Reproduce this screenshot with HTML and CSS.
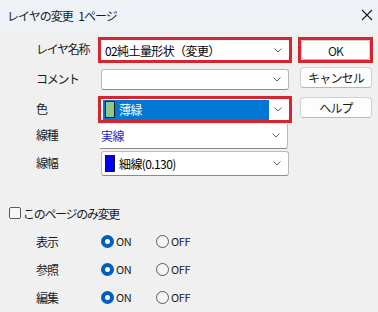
FILE: index.html
```html
<!DOCTYPE html>
<html lang="ja">
<head>
<meta charset="utf-8">
<link rel="stylesheet" href="styles.css">
</head>
<body>
<div class="titlebar">
  <span class="title">レイヤの変更 1ページ</span>
  <svg class="close" width="12" height="12" viewBox="0 0 12 12"><path d="M1 1 L11 11 M11 1 L1 11" stroke="#1b1b1b" stroke-width="1.1" fill="none"/></svg>
</div>
<div class="top">
  <div class="form">
    <div class="lbl">レイヤ名称</div>
    <div class="cell"><div class="mark"><div class="combo plain"><span class="val">02純土量形状（変更）</span><svg class="chev" width="8" height="5" viewBox="0 0 8 5"><path d="M0.5 0.5 L4 4 L7.5 0.5" stroke="#606060" fill="none"/></svg></div></div></div>

    <div class="lbl">コメント</div>
    <div class="cell"><div class="combo boxed"><span class="val"></span><svg class="chev" width="8" height="5" viewBox="0 0 8 5"><path d="M0.5 0.5 L4 4 L7.5 0.5" stroke="#606060" fill="none"/></svg></div></div>

    <div class="lbl">色</div>
    <div class="cell"><div class="mark"><div class="combo plain color"><span class="sel"><span class="swatch green"></span><span class="seltext">薄緑</span></span><svg class="chev" width="8" height="5" viewBox="0 0 8 5"><path d="M0.5 0.5 L4 4 L7.5 0.5" stroke="#606060" fill="none"/></svg></div></div></div>

    <div class="lbl">線種</div>
    <div class="cell"><div class="combo open"><span class="val blue">実線</span><svg class="chev" width="8" height="5" viewBox="0 0 8 5"><path d="M0.5 0.5 L4 4 L7.5 0.5" stroke="#606060" fill="none"/></svg></div></div>

    <div class="lbl">線幅</div>
    <div class="cell"><div class="combo boxed tall"><span class="swatch navy"></span><span class="val">細線(0.130)</span><svg class="chev" width="8" height="5" viewBox="0 0 8 5"><path d="M0.5 0.5 L4 4 L7.5 0.5" stroke="#606060" fill="none"/></svg></div></div>
  </div>
  <div class="buttons">
    <div class="mark btnmark"><button class="btn">OK</button></div>
    <button class="btn cancel">キャンセル</button>
    <button class="btn help">ヘルプ</button>
  </div>
</div>
<div class="bottom">
  <div class="check"><span class="box"></span><span class="ctext">このページのみ変更</span></div>
  <div class="radios">
    <div class="rlbl">表示</div>
    <div class="opt"><span class="radio on"></span><span class="otext">ON</span></div>
    <div class="opt"><span class="radio"></span><span class="otext">OFF</span></div>

    <div class="rlbl">参照</div>
    <div class="opt"><span class="radio on"></span><span class="otext">ON</span></div>
    <div class="opt"><span class="radio"></span><span class="otext">OFF</span></div>

    <div class="rlbl">編集</div>
    <div class="opt"><span class="radio on"></span><span class="otext">ON</span></div>
    <div class="opt"><span class="radio"></span><span class="otext">OFF</span></div>
  </div>
</div>
</body>
</html>
```

FILE: styles.css
```css
* { box-sizing: border-box; margin: 0; padding: 0; }
html, body { width: 378px; height: 312px; overflow: hidden; }
body {
  background: #f0f0f0;
  font-family: "Noto Sans CJK JP", "Noto Sans", sans-serif;
  font-size: 12px;
  color: #1a1a1a;
}
.titlebar {
  height: 30px;
  background: #eef2f7;
  display: flex;
  align-items: center;
  justify-content: space-between;
  padding: 0 5px 0 7px;
}
.title { letter-spacing: -1px; word-spacing: 4px; color: #1b1b1b; }
.close { display: block; }

.top { display: flex; padding-top: 7px; }
.form {
  display: grid;
  grid-template-columns: 98px 194px;
  grid-template-rows: 26px 33px 27px 26px 29px;
}
.lbl {
  padding-left: 36px;
  display: flex;
  align-items: center;
  letter-spacing: -1.3px;
  padding-bottom: 3px;
}
.cell { display: flex; align-items: center; padding-left: 3px; }
.mark { border: 3px solid #d7252f; height: 100%; width: 194px; }
.cell .mark { margin-left: -3px; }
.combo {
  display: flex;
  align-items: center;
  background: #fff;
  width: 188px;
  height: 21px;
}
.combo.plain { height: 100%; width: 100%; }
.combo.boxed { border: 1px solid #b9b9b9; border-bottom-color: #8a8a8a; border-radius: 3px; }
.combo.tall { height: 25px; }
.combo.open {
  height: 25px;
  margin-left: -1px;
  border-right: 1px solid #b9b9b9;
  border-bottom: 1px solid #8a8a8a;
  border-bottom-right-radius: 3px;
}
.val { padding-left: 4px; letter-spacing: -0.6px; white-space: nowrap; color: #000; }
.val.blue { color: #1c1cc8; padding-left: 1px; }
.chev { margin-left: auto; margin-right: 7px; flex: none; }
.combo.color { padding-left: 2px; }
.sel {
  display: flex;
  align-items: center;
  background: #0078d4;
  width: 166px;
  height: 20px;
  padding-left: 2px;
}
.swatch {
  display: block;
  width: 10px;
  height: 17px;
  border: 1px solid #1a1a1a;
  flex: none;
}
.green { background: #8cc98c; }
.navy { background: #0000ff; margin-left: 3px; }
.seltext { color: #fff; padding-left: 4px; letter-spacing: -0.6px; }

.buttons {
  display: flex;
  flex-direction: column;
  margin-left: 6px;
  width: 75px;
}
.btn {
  font-family: inherit;
  font-size: 12px;
  font-weight: normal;
  background: #fdfdfd;
  border: 1px solid #d0d0d0;
  border-bottom-color: #b8b8b8;
  border-radius: 4px;
  color: #1b1b1b;
  height: 21px;
  width: 72px;
  margin-left: 2px;
  letter-spacing: -0.8px;
}
.btnmark { height: 26px; width: 75px; }
.btnmark .btn { width: 100%; height: 100%; margin: 0; border-radius: 3px; }
.cancel { margin-top: 4px; }
.help { margin-top: 9px; }

.bottom { padding-top: 27px; }
.check { display: flex; align-items: center; height: 16px; padding-left: 9px; }
.box {
  width: 12px;
  height: 12px;
  border: 1px solid #5a5a5a;
  border-radius: 2px;
  background: #f7f7f7;
}
.ctext { padding-left: 2px; letter-spacing: -1.3px; }
.radios {
  display: grid;
  grid-template-columns: 65px 55px auto;
  grid-auto-rows: 28px;
  padding-left: 36px;
  margin-top: 6px;
}
.rlbl { display: flex; align-items: center; letter-spacing: -1px; }
.opt { display: flex; align-items: center; }
.radio {
  width: 13px;
  height: 13px;
  border-radius: 50%;
  border: 1px solid #5a5a5a;
  background: #f5f5f5;
  flex: none;
}
.radio.on {
  border: 4px solid #005fb8;
  background: #fff;
}
.otext { padding-left: 2px; font-size: 11px; letter-spacing: -0.4px; color: #1b1b1b; }
```
